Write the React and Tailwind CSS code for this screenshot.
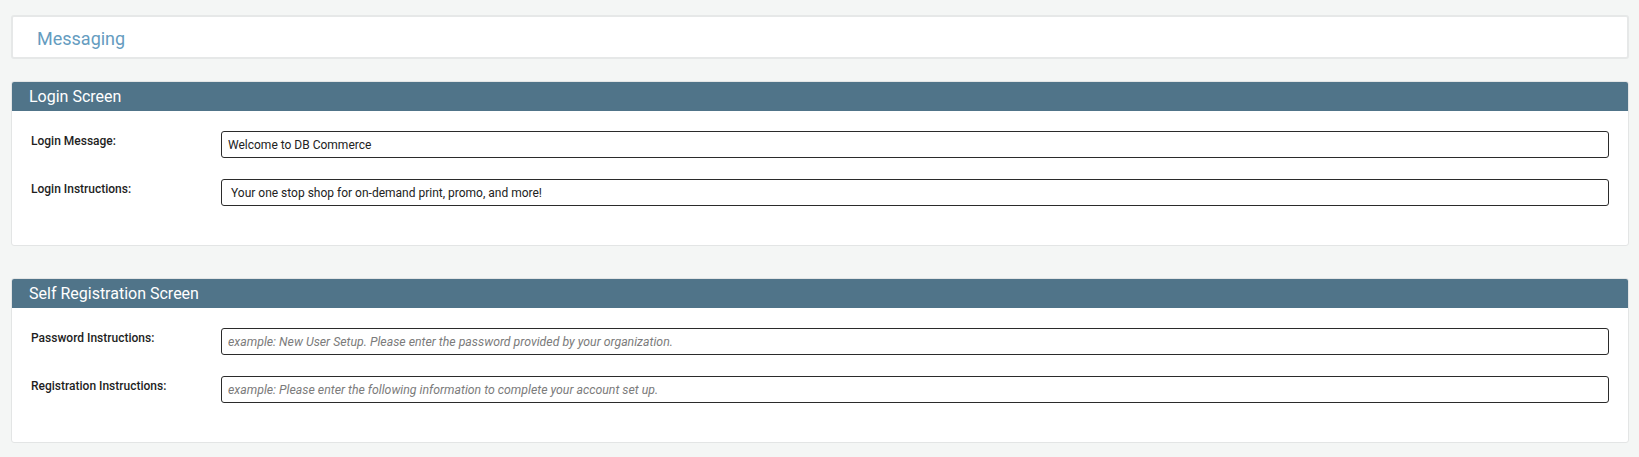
import React from "react";

const font = { fontFamily: "Roboto, 'Noto Sans', sans-serif" };

function Row({ label, value, placeholder }) {
  return (
    <div className="flex items-start">
      <div className="w-[190px] shrink-0 text-[12px] leading-[20px] font-medium text-[#1e1e1e]">
        {label}
      </div>
      <input
        type="text"
        defaultValue={value}
        placeholder={placeholder}
        className="flex-1 h-[27px] border border-[#2b2b2b] rounded-[3px] bg-white px-[6px] text-[12px] text-[#222] placeholder:text-[12.3px] placeholder:text-[#7b7b7b] placeholder:italic outline-none"
        style={font}
      />
    </div>
  );
}

function Section({ title, rows }) {
  return (
    <div className="bg-white border border-[#e3e5e5] rounded-[3px] overflow-hidden">
      <div className="h-[29px] bg-[#507489] flex items-center px-[17px] text-white text-[16px]">
        {title}
      </div>
      <div className="pt-[20px] pb-[39px] pl-[19px] pr-[19px] flex flex-col gap-[21px]">
        {rows.map((r) => (
          <Row key={r.label} {...r} />
        ))}
      </div>
    </div>
  );
}

export default function App() {
  return (
    <div
      className="min-h-[457px] bg-[#f4f6f5] pl-[11px] pr-[10px] pt-[15px] pb-[13px]"
      style={font}
    >
      <div className="h-[44px] bg-white border-2 border-[#e6e8e8] rounded-[3px] flex items-center pl-[24px] pt-[2px]">
        <span className="text-[18px] text-[#659cbf]">Messaging</span>
      </div>
      <div className="mt-[22px]">
        <Section
          title="Login Screen"
          rows={[
            { label: "Login Message:", value: "Welcome to DB Commerce" },
            {
              label: "Login Instructions:",
              value: " Your one stop shop for on-demand print, promo, and more!",
            },
          ]}
        />
      </div>
      <div className="mt-[32px]">
        <Section
          title="Self Registration Screen"
          rows={[
            {
              label: "Password Instructions:",
              placeholder:
                "example: New User Setup. Please enter the password provided by your organization.",
            },
            {
              label: "Registration Instructions:",
              placeholder:
                "example: Please enter the following information to complete your account set up.",
            },
          ]}
        />
      </div>
    </div>
  );
}
